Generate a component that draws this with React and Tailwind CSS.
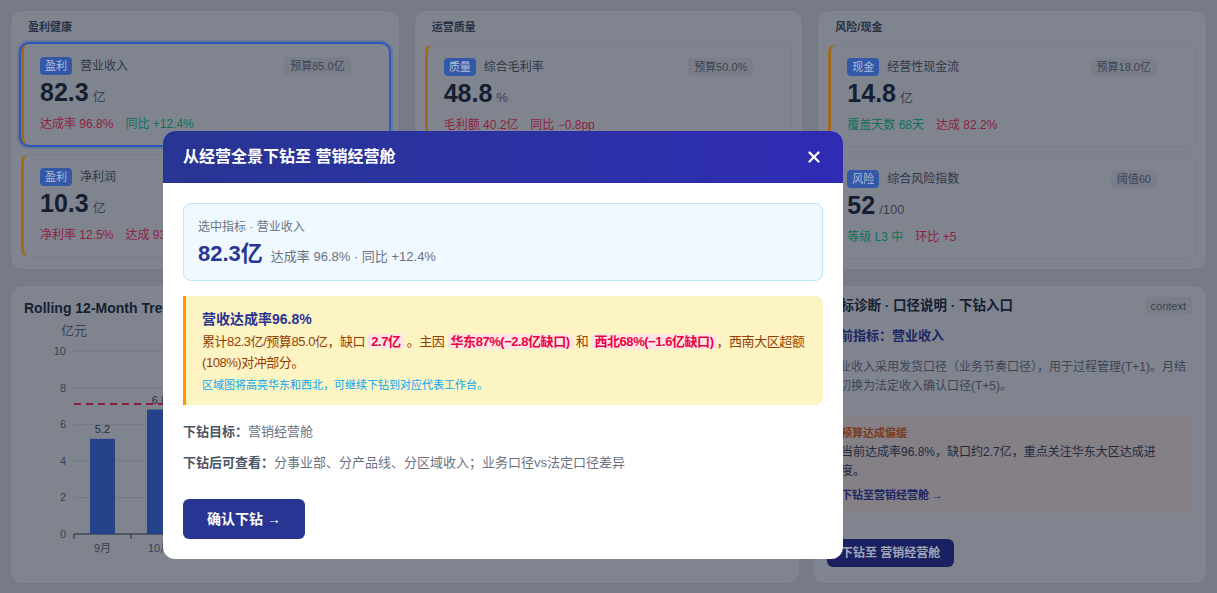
import React from 'react'
import { X } from 'lucide-react'

// The page behind the dialog is drawn in its dimmed colours (as seen under the backdrop).
const groups = [
  {
    title: '盈利健康',
    cards: [
      { badge: '盈利', name: '营业收入', tag: '预算85.0亿', value: '82.3', unit: '亿', a: ['达成率 96.8%', 'red'], b: ['同比 +12.4%', 'green'], selected: true },
      { badge: '盈利', name: '净利润', tag: '预算11.0亿', value: '10.3', unit: '亿', a: ['净利率 12.5%', 'red'], b: ['达成 93.6%', 'red'] },
    ],
  },
  {
    title: '运营质量',
    cards: [
      { badge: '质量', name: '综合毛利率', tag: '预算50.0%', value: '48.8', unit: '%', a: ['毛利额 40.2亿', 'red'], b: ['同比 −0.8pp', 'red'] },
      { badge: '质量', name: '应收周转天数', tag: '目标45天', value: '52', unit: '天', a: ['环比 +3天', 'red'], b: ['逾期 6.2%', 'red'] },
    ],
  },
  {
    title: '风险/现金',
    cards: [
      { badge: '现金', name: '经营性现金流', tag: '预算18.0亿', value: '14.8', unit: '亿', a: ['覆盖天数 68天', 'green'], b: ['达成 82.2%', 'red'] },
      { badge: '风险', name: '综合风险指数', tag: '阈值60', value: '52', unit: '/100', a: ['等级 L3 中', 'green'], b: ['环比 +5', 'red'] },
    ],
  },
]

const tone = (t) => (t === 'green' ? 'text-[#11705a]' : 'text-[#8e1f42]')

const MetricCard = ({ card }) => (
  <div
    className={
      'rounded-lg bg-[#80848f] border-l-[3px] border-l-[#a06a1e] pl-4 pr-[38px] pt-[13px] pb-[13px] ' +
      (card.selected ? 'outline-2 outline-[#2d56b8] ring-4 ring-[#6a7897]' : 'border border-[#7a7e8a]')
    }
  >
    <div className="flex items-center h-[18px]">
      <span className="bg-[#3458a8] text-[#b3bdd6] text-[11px] leading-[18px] px-[5px] rounded">{card.badge}</span>
      <span className="ml-2 text-xs text-[#2f3748]">{card.name}</span>
      <span className="ml-auto bg-[#7a7e89] text-[#3a4252] text-[11px] leading-[18px] px-1.5 rounded">{card.tag}</span>
    </div>
    <div className="mt-[2px] h-[30px] flex items-baseline">
      <span className="text-[25px] font-bold text-[#161f32] leading-[30px]">{card.value}</span>
      <span className="ml-1 text-[13px] text-[#3a4252]">{card.unit}</span>
    </div>
    <div className="mt-[9px] flex gap-3 text-xs leading-4">
      <span className={tone(card.a[1])}>{card.a[0]}</span>
      <span className={tone(card.b[1])}>{card.b[0]}</span>
    </div>
  </div>
)

const months = ['9月', '10月', '11月', '12月', '1月', '2月', '3月', '4月', '5月', '6月', '7月', '8月']
const vals = [5.2, 6.8, 7.1, 8.9, 6.3, 5.8, 7.4, 7.9, 8.1, 7.6, 8.4, 8.2]
const yOf = (v) => 216 - 18.3 * v

const TrendChart = () => (
  <svg width="770" height="240" className="block">
    <text x="37" y="17" fontSize="13" fill="#3a4252">亿元</text>
    {[0, 2, 4, 6, 8, 10].map((v) => (
      <g key={v}>
        <line x1="50" x2="757" y1={yOf(v)} y2={yOf(v)} stroke="#737885" strokeWidth="1" />
        <text x="42" y={yOf(v) + 4} fontSize="11" fill="#3a4252" textAnchor="end">{v}</text>
      </g>
    ))}
    <line x1="50" x2="757" y1="216" y2="216" stroke="#262e3f" strokeWidth="1" />
    {months.map((m, i) => (
      <g key={m}>
        <line x1={50 + 57 * i} x2={50 + 57 * i} y1="216" y2="221" stroke="#262e3f" />
        <rect x={66 + 57 * i} y={yOf(vals[i])} width="25" height={216 - yOf(vals[i])} fill="#24438a" />
        <text x={78.5 + 57 * i} y={yOf(vals[i]) - 6} fontSize="11" fill="#262e3f" textAnchor="middle">{vals[i]}</text>
        <text x={78.5 + 57 * i} y="234" fontSize="11" fill="#3a4252" textAnchor="middle">{m}</text>
      </g>
    ))}
    <line x1="50" x2="757" y1={yOf(7.1)} y2={yOf(7.1)} stroke="#8c2042" strokeWidth="2" strokeDasharray="7 5" />
  </svg>
)

const Hl = ({ children }) => (
  <span className="bg-rose-100 text-rose-600 font-bold rounded px-[3px]">{children}</span>
)

export default function App() {
  return (
    <div className="relative h-[593px] overflow-hidden bg-[#777b88] p-2.5 font-['Liberation_Sans','Noto_Sans_CJK_SC',sans-serif]">
      <div className="grid grid-cols-3 gap-3.5">
        {groups.map((g) => (
          <div key={g.title} className="bg-[#80848f] rounded-xl border border-[#757986] px-2.5 pt-[8px] pb-[10px]">
            <div className="ml-[7px] text-[11px] font-bold text-[#2a3142] leading-4">{g.title}</div>
            <div className="mt-[9px] flex flex-col gap-[9px]">
              {g.cards.map((c) => (
                <MetricCard key={c.name} card={c} />
              ))}
            </div>
          </div>
        ))}
      </div>

      <div className="mt-[15px] grid grid-cols-[1fr_395px] gap-3 h-[299px]">
        <div className="bg-[#80848f] rounded-xl border border-[#757986] px-[13px] pt-3 overflow-hidden">
          <div className="text-sm font-bold text-[#161f32] leading-5">Rolling 12-Month Trend · 营业收入 vs 预算</div>
          <TrendChart />
        </div>
        <div className="bg-[#80848f] rounded-xl border border-[#757986] px-3.5 pt-2.5">
          <div className="flex items-center justify-between">
            <span className="text-[13.5px] font-bold text-[#161f32] leading-5">指标诊断 · 口径说明 · 下钻入口</span>
            <span className="bg-[#7a7e89] text-[#3a4252] text-[11px] leading-[18px] px-1.5 rounded">context</span>
          </div>
          <div className="mt-2.5 text-[13px] font-bold text-[#1d2763] leading-5">当前指标：营业收入</div>
          <p className="mt-3 pr-1 text-xs text-[#3d4555] leading-[19px]">
            营业收入采用发货口径（业务节奏口径），用于过程管理(T+1)。月结后切换为法定收入确认口径(T+5)。
          </p>
          <div className="mt-5 bg-[#857f86] rounded-lg px-3.5 pt-[7px] pb-2">
            <div className="text-[11px] font-bold text-[#7a3a22] leading-5">预算达成偏缓</div>
            <div className="text-xs text-[#222b3c] leading-[19px]">当前达成率96.8%，缺口约2.7亿，重点关注华东大区达成进度。</div>
            <div className="mt-1 text-[11px] font-bold text-[#1d2763] leading-5">下钻至营销经营舱 →</div>
          </div>
          <button className="mt-[26px] bg-[#1b2160] text-[#a0a5b8] text-xs font-bold rounded-md px-3.5 h-7">下钻至 营销经营舱</button>
        </div>
      </div>

      <div className="absolute z-20 left-[163px] top-[131px] w-[680px] h-[428px] bg-white rounded-xl overflow-hidden">
        <div className="h-[52px] flex items-center justify-between px-5 bg-gradient-to-r from-[#283593] to-[#2f2bb3]">
          <span className="text-white text-base font-bold">从经营全景下钻至 营销经营舱</span>
          <X size={18} strokeWidth={3} className="text-white" />
        </div>
        <div className="px-5 pt-5">
          <div className="h-[78px] bg-sky-50 border border-sky-200 rounded-lg px-[14px] pt-[15px]">
            <div className="text-xs text-gray-500 leading-4">选中指标 · 营业收入</div>
            <div className="mt-[5px] flex items-baseline">
              <span className="text-[22px] font-bold text-[#283593] leading-7">82.3亿</span>
              <span className="ml-2 text-[13px] text-gray-500">达成率 96.8% · 同比 +12.4%</span>
            </div>
          </div>

          <div className="mt-[15px] bg-[#fdf4c4] border-l-[3px] border-l-[#ff9800] rounded-r-lg pl-4 pr-2 pt-[13px] pb-3">
            <div className="text-sm font-bold text-[#283593] leading-5">营收达成率96.8%</div>
            <div className="mt-0.5 text-[13px] text-amber-800 leading-[21px] tracking-[-0.45px]">
              累计82.3亿/预算85.0亿，缺口 <Hl>2.7亿</Hl> 。主因 <Hl>华东87%(−2.8亿缺口)</Hl> 和 <Hl>西北68%(−1.6亿缺口)</Hl>，西南大区超额(108%)对冲部分。
            </div>
            <div className="mt-1 text-[11px] text-sky-500 leading-4">区域图将高亮华东和西北，可继续下钻到对应代表工作台。</div>
          </div>

          <div className="mt-[17px] text-[13px] leading-5">
            <span className="font-bold text-gray-600">下钻目标：</span>
            <span className="text-gray-500">营销经营舱</span>
          </div>
          <div className="mt-[11px] text-[13px] leading-5">
            <span className="font-bold text-gray-600">下钻后可查看：</span>
            <span className="text-gray-500">分事业部、分产品线、分区域收入；业务口径vs法定口径差异</span>
          </div>

          <button className="mt-[26px] h-10 px-6 bg-[#283593] text-white text-sm font-bold rounded-md">确认下钻 →</button>
        </div>
      </div>
    </div>
  )
}
